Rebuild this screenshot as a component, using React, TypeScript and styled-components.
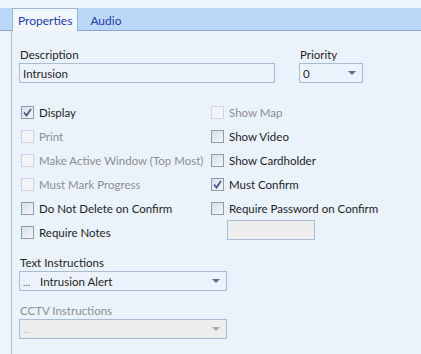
import { createGlobalStyle, styled } from "styled-components";

const GlobalStyle = createGlobalStyle`
  html, body {
    margin: 0;
    padding: 0;
    background: #eef4fc;
  }
  body {
    font-family: Lato, "Liberation Sans", sans-serif;
    font-size: 11.5px;
    color: #1e1e1e;
    white-space: nowrap;
  }
`;

const Page = styled.div`
  width: 421px;
  height: 354px;
  overflow: hidden;
  padding-top: 8px;
  box-sizing: border-box;
`;

const TabStrip = styled.div`
  height: 22px;
  background: #bcd8f9;
  border-bottom: 1px solid #8ea7c6;
  display: flex;
  align-items: flex-end;
  padding-left: 12px;
`;

const Tab = styled.div<{ $active?: boolean }>`
  height: ${(p) => (p.$active ? "23px" : "20px")};
  margin-bottom: ${(p) => (p.$active ? "-1px" : "0")};
  padding: 0 5px;
  box-sizing: border-box;
  display: flex;
  align-items: center;
  font-size: 12px;
  color: #1f3aa8;
  background: ${(p) => (p.$active ? "#f2f7fe" : "transparent")};
  border: 1px solid ${(p) => (p.$active ? "#9fb6d3" : "transparent")};
  border-bottom: none;
  margin-right: 6px;
`;

const Panel = styled.div`
  margin-left: 11px;
  border-left: 1px solid #a9c2e2;
  background: #eaf2fc;
  height: 324px;
  padding: 16px 0 0 7px;
  box-sizing: border-box;
`;

const TopRow = styled.div`
  display: flex;
  gap: 24px;
`;

const Field = styled.div<{ $w: number }>`
  width: ${(p) => p.$w}px;
  display: flex;
  flex-direction: column;
`;

const Label = styled.div<{ $disabled?: boolean }>`
  height: 16px;
  line-height: 16px;
  padding-left: 1px;
  color: ${(p) => (p.$disabled ? "#8e8e8e" : "#1e1e1e")};
`;

const TextBox = styled.div<{ $disabled?: boolean }>`
  height: 20px;
  box-sizing: border-box;
  border: 1px solid #abbbd2;
  background: ${(p) => (p.$disabled ? "#eeeeee" : "#ebf2fb")};
  padding-left: 3px;
  display: flex;
  align-items: center;
`;

const Combo = styled(TextBox)`
  justify-content: space-between;
  padding-right: 6px;
`;

const Arrow = styled.div<{ $disabled?: boolean }>`
  width: 0;
  height: 0;
  border-left: 4px solid transparent;
  border-right: 4px solid transparent;
  border-top: 4px solid ${(p) => (p.$disabled ? "#a8a8a8" : "#5a6f91")};
`;

const Ellipsis = styled.span<{ $disabled?: boolean }>`
  display: inline-block;
  color: ${(p) => (p.$disabled ? "#b0b0b0" : "#555")};
  font-size: 10px;
  width: 17px;
`;

const CheckGrid = styled.div`
  margin-top: 17px;
  display: grid;
  grid-template-columns: 190px 180px;
  grid-auto-rows: 24px;
  padding-left: 2px;
`;

const CheckRow = styled.div<{ $disabled?: boolean }>`
  display: flex;
  align-items: center;
  gap: 5px;
  color: ${(p) => (p.$disabled ? "#8e8e8e" : "#1e1e1e")};
`;

const Box = styled.div<{ $disabled?: boolean }>`
  width: 13px;
  height: 13px;
  flex-shrink: 0;
  box-sizing: border-box;
  border: 1px solid ${(p) => (p.$disabled ? "#cfd6de" : "#8f9db0")};
  background: ${(p) =>
    p.$disabled ? "#f3f5f8" : "linear-gradient(135deg, #d9dde3, #f6f7f9)"};
  display: flex;
  align-items: center;
  justify-content: center;
`;

const SmallBox = styled(TextBox)`
  margin-left: 16px;
  width: 88px;
  background: #eeeeee;
`;

const Lower = styled.div`
  margin-top: 11px;
  display: flex;
  flex-direction: column;
  gap: 12px;
`;

const Check = () => (
  <svg width="9" height="9" viewBox="0 0 9 9">
    <path d="M1 4.5 L3.5 7.5 L8 1" stroke="#3a5a8c" strokeWidth="1.7" fill="none" />
  </svg>
);

type Item = { label: string; checked?: boolean; disabled?: boolean };

const left: Item[] = [
  { label: "Display", checked: true },
  { label: "Print", disabled: true },
  { label: "Make Active Window (Top Most)", disabled: true },
  { label: "Must Mark Progress", disabled: true },
  { label: "Do Not Delete on Confirm" },
  { label: "Require Notes" },
];

const right: Item[] = [
  { label: "Show Map", disabled: true },
  { label: "Show Video" },
  { label: "Show Cardholder" },
  { label: "Must Confirm", checked: true },
  { label: "Require Password on Confirm" },
];

const CheckItem = ({ item }: { item: Item }) => (
  <CheckRow $disabled={item.disabled}>
    <Box $disabled={item.disabled}>{item.checked && <Check />}</Box>
    {item.label}
  </CheckRow>
);

const App = () => {
  const cells = [];
  for (let i = 0; i < 6; i++) {
    cells.push(<CheckItem key={"l" + i} item={left[i]} />);
    if (i < 5) {
      cells.push(<CheckItem key={"r" + i} item={right[i]} />);
    } else {
      cells.push(<SmallBox key="pw" />);
    }
  }

  return (
    <>
      <GlobalStyle />
      <Page>
        <TabStrip>
          <Tab $active>Properties</Tab>
          <Tab>Audio</Tab>
        </TabStrip>
        <Panel>
          <TopRow>
            <Field $w={256}>
              <Label>Description</Label>
              <TextBox>Intrusion</TextBox>
            </Field>
            <Field $w={64}>
              <Label>Priority</Label>
              <Combo>
                0
                <Arrow />
              </Combo>
            </Field>
          </TopRow>
          <CheckGrid>{cells}</CheckGrid>
          <Lower>
            <Field $w={208}>
              <Label>Text Instructions</Label>
              <Combo>
                <span>
                  <Ellipsis>...</Ellipsis>
                  Intrusion Alert
                </span>
                <Arrow />
              </Combo>
            </Field>
            <Field $w={208}>
              <Label $disabled>CCTV Instructions</Label>
              <Combo $disabled>
                <Ellipsis $disabled>...</Ellipsis>
                <Arrow $disabled />
              </Combo>
            </Field>
          </Lower>
        </Panel>
      </Page>
    </>
  );
};

export default App;
